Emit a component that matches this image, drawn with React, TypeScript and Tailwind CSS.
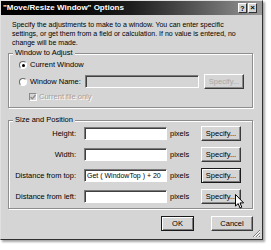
const FONT = { fontFamily: '"Liberation Sans", Arial, sans-serif' };

function Btn({
  label,
  w,
  disabled = false,
  focused = false,
}: {
  label: string;
  w: string;
  disabled?: boolean;
  focused?: boolean;
}) {
  return (
    <div
      className={`flex h-[15px] shrink-0 items-center justify-center bg-[#d5d5d5] text-[7.5px] leading-none ${w} ${
        focused
          ? "border border-[#1a1a1a] shadow-[inset_1px_1px_0_#fff,inset_-1px_-1px_0_#7a7a7a]"
          : "border border-t-white border-l-white border-b-[#3a3a3a] border-r-[#3a3a3a] shadow-[inset_-1px_-1px_0_#8a8a8a]"
      } ${disabled ? "text-[#a8a8a8]" : "text-black"}`}
    >
      {label}
    </div>
  );
}

function Field({ w, value = "", disabled = false }: { w: string; value?: string; disabled?: boolean }) {
  return (
    <div
      className={`flex h-[13px] shrink-0 items-center overflow-hidden whitespace-nowrap px-[2px] text-[7px] leading-none text-black ${w} ${
        disabled ? "bg-[#d5d5d5]" : "bg-white"
      } border border-t-[#7a7a7a] border-l-[#7a7a7a] border-b-white border-r-white shadow-[inset_1px_1px_0_#404040]`}
    >
      {value}
    </div>
  );
}

function Group({ title, h, children }: { title: string; h: string; children: React.ReactNode }) {
  return (
    <div
      className={`relative ml-[7px] w-[245px] ${h} border border-[#8e8e8e] shadow-[inset_1px_1px_0_#fff,1px_1px_0_#fff]`}
    >
      <span className="absolute -top-[6px] left-[4px] bg-[#d5d5d5] px-[2px] text-[7.5px] leading-[10px] text-black">
        {title}
      </span>
      {children}
    </div>
  );
}

function SizeRow({ label, value, focused }: { label: string; value?: string; focused?: boolean }) {
  return (
    <div className="flex h-[13px] items-center">
      <span className="w-[67px] shrink-0 text-right text-[7.5px] leading-none text-black">{label}</span>
      <div className="ml-[8px]">
        <Field w="w-[83px]" value={value} />
      </div>
      <span className="ml-[3px] w-[31px] text-[7.5px] leading-none text-black">pixels</span>
      <Btn label="Specify..." w="w-[40px]" focused={focused} />
    </div>
  );
}

export default function App() {
  return (
    <div className="h-[250px] w-[271px] bg-white" style={FONT}>
      <div className="relative flex h-[240px] w-[263px] flex-col border border-t-[#e0e0e0] border-l-[#e0e0e0] border-b-[#303030] border-r-[#303030] bg-[#d5d5d5] shadow-[2px_2px_2px_rgba(0,0,0,0.35)]">
        {/* title bar */}
        <div className="flex h-[14px] items-center justify-between bg-gradient-to-r from-black via-[#1e1e1e] to-[#9a9a9a] pl-[2px] pr-[5px]">
          <span className="text-[8px] font-bold leading-none text-white">"Move/Resize Window" Options</span>
          <div className="flex gap-[1px]">
            <div className="flex h-[10px] w-[9px] items-center justify-center border border-t-white border-l-white border-b-[#303030] border-r-[#303030] bg-[#d5d5d5] text-[7px] font-bold leading-none text-black">
              ?
            </div>
            <div className="flex h-[10px] w-[9px] items-center justify-center border border-t-white border-l-white border-b-[#303030] border-r-[#303030] bg-[#d5d5d5] text-[8px] font-bold leading-none text-black">
              ×
            </div>
          </div>
        </div>

        <p className="ml-[11px] mt-[5px] whitespace-nowrap text-[7px] leading-[9px] text-black">
          Specify the adjustments to make to a window. You can enter specific
          <br />
          settings, or get them from a field or calculation. If no value is entered, no
          <br />
          change will be made.
        </p>

        <div className="mt-[6px]">
          <Group title="Window to Adjust" h="h-[55px]">
            <div className="flex flex-col pl-[10px] pt-[5px]">
              <div className="flex h-[12px] items-center gap-[3px]">
                <span className="flex h-[8px] w-[8px] items-center justify-center rounded-full border border-[#6a6a6a] border-b-white border-r-white bg-white">
                  <span className="h-[3px] w-[3px] rounded-full bg-black" />
                </span>
                <span className="text-[7.5px] leading-none text-black">Current Window</span>
              </div>
              <div className="mt-[3px] flex h-[15px] items-center">
                <div className="flex w-[66px] items-center gap-[3px]">
                  <span className="h-[8px] w-[8px] rounded-full border border-[#6a6a6a] border-b-white border-r-white bg-white" />
                  <span className="text-[7.5px] leading-none text-black">Window Name:</span>
                </div>
                <Field w="w-[114px]" disabled />
                <div className="ml-[5px]">
                  <Btn label="Specify..." w="w-[40px]" disabled />
                </div>
              </div>
              <div className="mt-[3px] flex h-[10px] items-center gap-[2px] pl-[10px]">
                <span className="flex h-[8px] w-[8px] items-center justify-center border border-[#8a8a8a] border-b-white border-r-white bg-[#d5d5d5]">
                  <svg width="6" height="6" viewBox="0 0 6 6">
                    <path d="M0.5 3 L2.3 4.8 L5.5 1" fill="none" stroke="#8a8a8a" strokeWidth="1.3" />
                  </svg>
                </span>
                <span className="text-[7.5px] leading-none text-[#a0a0a0] [text-shadow:1px_1px_0_#fff]">
                  Current file only
                </span>
              </div>
            </div>
          </Group>
        </div>

        <div className="mt-[12px]">
          <Group title="Size and Position" h="h-[89px]">
            <div className="flex flex-col gap-[8px] pt-[6px]">
              <SizeRow label="Height:" />
              <SizeRow label="Width:" />
              <SizeRow label="Distance from top:" value="Get ( WindowTop ) + 20" focused />
              <SizeRow label="Distance from left:" />
            </div>
          </Group>
        </div>

        <div className="mt-[7px] flex justify-end gap-[17px] pr-[9px]">
          <Btn label="OK" w="w-[33px]" focused />
          <Btn label="Cancel" w="w-[42px]" />
        </div>

        {/* resize grip */}
        <svg className="absolute bottom-[1px] right-[1px]" width="9" height="9" viewBox="0 0 9 9">
          <path d="M8 1 L1 8 M8 4 L4 8 M8 7 L7 8" stroke="#808080" strokeWidth="1" />
          <path d="M8 2 L2 8 M8 5 L5 8" stroke="#fff" strokeWidth="1" />
        </svg>

        {/* mouse cursor */}
        <svg className="absolute left-[234px] top-[193px]" width="10" height="16" viewBox="0 0 10 16">
          <path
            d="M0.5 0.5 L0.5 12 L3.2 9.6 L5 14 L6.8 13.2 L5 8.9 L8.6 8.9 Z"
            fill="#fff"
            stroke="#000"
            strokeWidth="1"
            strokeLinejoin="miter"
          />
        </svg>
      </div>
    </div>
  );
}
